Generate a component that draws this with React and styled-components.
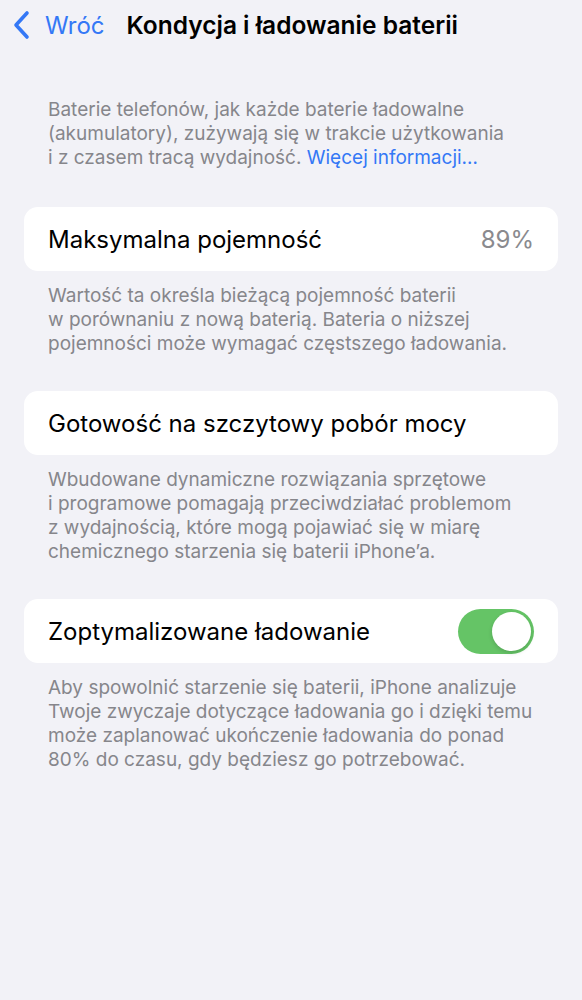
import React from 'react';
import styled, { createGlobalStyle } from 'styled-components';

const GlobalStyle = createGlobalStyle`
  html, body {
    margin: 0;
    padding: 0;
    background: #f2f2f7;
  }
  body {
    font-family: Inter, "Noto Sans", "Liberation Sans", sans-serif;
    -webkit-font-smoothing: antialiased;
  }
`;

const Screen = styled.div`
  width: 582px;
  min-height: 1000px;
  background: #f2f2f7;
  box-sizing: border-box;
`;

const NavBar = styled.div`
  height: 50px;
  display: flex;
  align-items: center;
  padding-left: 12px;
`;

const BackButton = styled.div`
  display: flex;
  align-items: center;
  gap: 15px;
  color: #3478f6;
  font-size: 24px;
`;

const Title = styled.h1`
  margin: 0 0 0 22px;
  font-size: 24.5px;
  font-weight: 600;
  color: #000;
`;

const Content = styled.div`
  padding: 48px 24px 0;
`;

const Note = styled.p`
  margin: ${(p) => p.$top || 0}px 0 0;
  padding: 0 24px;
  font-size: 19px;
  line-height: 24px;
  color: #86868b;
`;

const Link = styled.span`
  color: #3478f6;
`;

const Card = styled.div`
  margin-top: ${(p) => p.$top}px;
  height: 64px;
  background: #fff;
  border-radius: 14px;
  display: flex;
  align-items: center;
  justify-content: space-between;
  padding: 0 24px;
`;

const Label = styled.span`
  font-size: 24px;
  color: #000;
`;

const Value = styled.span`
  font-size: 24px;
  color: #8a8a8e;
`;

const Switch = styled.div`
  width: 76px;
  height: 45px;
  border-radius: 23px;
  background: ${(p) => (p.$on ? '#65c466' : '#e9e9eb')};
  display: flex;
  align-items: center;
  justify-content: ${(p) => (p.$on ? 'flex-end' : 'flex-start')};
  padding: 0 3px;
  box-sizing: border-box;
`;

const Knob = styled.div`
  width: 39px;
  height: 39px;
  border-radius: 50%;
  background: #fff;
  box-shadow: 0 2px 4px rgba(0, 0, 0, 0.15);
`;

function Chevron() {
  return (
    <svg width="18" height="30" viewBox="0 0 18 30">
      <path
        d="M15 3 L4 15 L15 27"
        fill="none"
        stroke="#3478f6"
        strokeWidth="3.6"
        strokeLinecap="round"
        strokeLinejoin="round"
      />
    </svg>
  );
}

export default function App() {
  return (
    <Screen>
      <GlobalStyle />
      <NavBar>
        <BackButton>
          <Chevron />
          <span>Wróć</span>
        </BackButton>
        <Title>Kondycja i ładowanie baterii</Title>
      </NavBar>
      <Content>
        <Note>
          Baterie telefonów, jak każde baterie ładowalne
          <br />
          (akumulatory), zużywają się w trakcie użytkowania
          <br />i z czasem tracą wydajność. <Link>Więcej informacji…</Link>
        </Note>
        <Card $top={37}>
          <Label>Maksymalna pojemność</Label>
          <Value>89%</Value>
        </Card>
        <Note $top={13}>
          Wartość ta określa bieżącą pojemność baterii
          <br />
          w porównaniu z nową baterią. Bateria o niższej
          <br />
          pojemności może wymagać częstszego ładowania.
        </Note>
        <Card $top={35}>
          <Label>Gotowość na szczytowy pobór mocy</Label>
        </Card>
        <Note $top={13}>
          Wbudowane dynamiczne rozwiązania sprzętowe
          <br />
          i programowe pomagają przeciwdziałać problemom
          <br />
          z wydajnością, które mogą pojawiać się w miarę
          <br />
          chemicznego starzenia się baterii iPhone’a.
        </Note>
        <Card $top={35}>
          <Label>Zoptymalizowane ładowanie</Label>
          <Switch $on>
            <Knob />
          </Switch>
        </Card>
        <Note $top={13}>
          Aby spowolnić starzenie się baterii, iPhone analizuje
          <br />
          Twoje zwyczaje dotyczące ładowania go i dzięki temu
          <br />
          może zaplanować ukończenie ładowania do ponad
          <br />
          80% do czasu, gdy będziesz go potrzebować.
        </Note>
      </Content>
    </Screen>
  );
}
